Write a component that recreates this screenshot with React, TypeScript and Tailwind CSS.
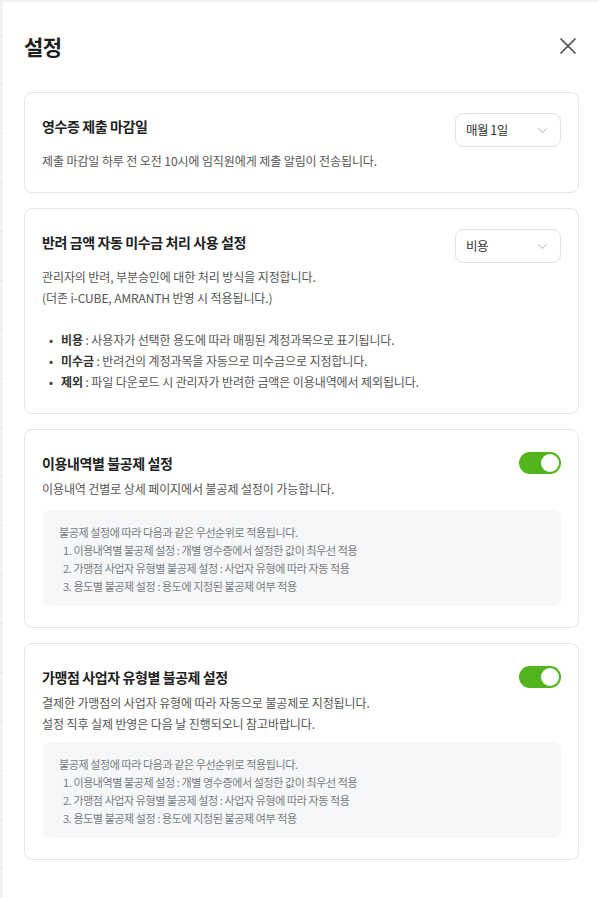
import { X, ChevronDown } from "lucide-react"

const font = { fontFamily: '"Noto Sans CJK KR", "Noto Sans", sans-serif' }

const priorityLines = [
    "1. 이용내역별 불공제 설정 : 개별 영수증에서 설정한 값이 최우선 적용",
    "2. 가맹점 사업자 유형별 불공제 설정 : 사업자 유형에 따라 자동 적용",
    "3. 용도별 불공제 설정 : 용도에 지정된 불공제 여부 적용",
]

function Select({ value }: { value: string }) {
    return (
        <button className="flex h-[34px] w-[106px] shrink-0 items-center justify-between rounded-[8px] border border-[#e1e3e6] bg-white pl-[10px] pr-[10px] text-[12.5px] tracking-[-0.5px] text-[#333]">
            <span>{value}</span>
            <ChevronDown size={15} strokeWidth={1.3} className="text-[#9a9ea5]" />
        </button>
    )
}

function Toggle() {
    return (
        <div className="flex h-[22px] w-[42px] shrink-0 items-center justify-end rounded-full bg-[#52b51e] pr-[2px]">
            <div className="h-[18px] w-[18px] rounded-full bg-white" />
        </div>
    )
}

function Card({ children }: { children: React.ReactNode }) {
    return (
        <section className="rounded-[8px] border border-[#e3e5e8] bg-white px-[17px] pt-[20px] pb-[21px]">
            {children}
        </section>
    )
}

function Title({ children }: { children: React.ReactNode }) {
    return <h3 className="text-[14px] font-bold leading-[26px] tracking-[-0.4px] text-[#222]">{children}</h3>
}

function PriorityBox({ className }: { className: string }) {
    return (
        <div className={`rounded-[8px] bg-[#f6f7f9] pl-[17px] pt-[13px] pb-[11px] text-[11px] leading-[18px] tracking-[-0.4px] text-[#777b80] ${className}`}>
            <p>불공제 설정에 따라 다음과 같은 우선순위로 적용됩니다.</p>
            {priorityLines.map((line) => (
                <p key={line} className="pl-[4px]">{line}</p>
            ))}
        </div>
    )
}

const bullets = [
    { label: "비용", text: "사용자가 선택한 용도에 따라 매핑된 계정과목으로 표기됩니다." },
    { label: "미수금", text: "반려건의 계정과목을 자동으로 미수금으로 지정합니다." },
    { label: "제외", text: "파일 다운로드 시 관리자가 반려한 금액은 이용내역에서 제외됩니다." },
]

export default function App() {
    return (
        <div className="flex min-h-screen bg-[#f2f2f3] pt-[2px]" style={font}>
            {/* page behind the drawer */}
            <div className="w-[3px] shrink-0 bg-[repeating-linear-gradient(to_bottom,#f2f2f3_0px,#f2f2f3_33px,#e4e4e6_33px,#e4e4e6_34px,#f2f2f3_34px,#f2f2f3_49px)]" />

            <div className="flex-1 bg-white pl-[21px] pr-[20px] pt-[28px] pb-[38px]">
                {/* Header */}
                <div className="mb-[30px] flex items-center justify-between">
                    <h2 className="text-[21px] font-bold leading-[32px] tracking-[-0.5px] text-[#1e1e1e]">설정</h2>
                    <button className="mr-[-3px] text-[#4b4f55]">
                        <X size={28} strokeWidth={1.5} />
                    </button>
                </div>

                <div className="flex flex-col gap-[15px]">
                    {/* 영수증 제출 마감일 */}
                    <Card>
                        <div className="flex items-start justify-between">
                            <Title>영수증 제출 마감일</Title>
                            <Select value="매월 1일" />
                        </div>
                        <p className="mt-[3px] text-[12px] leading-[21px] tracking-[-0.1px] text-[#555]">
                            제출 마감일 하루 전 오전 10시에 임직원에게 제출 알림이 전송됩니다.
                        </p>
                    </Card>

                    {/* 반려 금액 자동 미수금 처리 */}
                    <Card>
                        <div className="flex items-start justify-between">
                            <Title>반려 금액 자동 미수금 처리 사용 설정</Title>
                            <Select value="비용" />
                        </div>
                        <div className="mt-[3px] text-[12px] leading-[21px] tracking-[-0.1px] text-[#555]">
                            <p>관리자의 반려, 부분승인에 대한 처리 방식을 지정합니다.</p>
                            <p>(더존 i-CUBE, AMRANTH 반영 시 적용됩니다.)</p>
                            <ul className="mt-[21px]">
                                {bullets.map((b) => (
                                    <li key={b.label} className="flex">
                                        <span className="w-[19px] shrink-0 pl-[7px] text-[#444]">•</span>
                                        <span>
                                            <b className="font-bold text-[#333]">{b.label}</b> : {b.text}
                                        </span>
                                    </li>
                                ))}
                            </ul>
                        </div>
                    </Card>

                    {/* 이용내역별 불공제 */}
                    <Card>
                        <div className="flex items-center justify-between">
                            <Title>이용내역별 불공제 설정</Title>
                            <Toggle />
                        </div>
                        <p className="mt-[2px] text-[12px] leading-[21px] tracking-[-0.1px] text-[#555]">
                            이용내역 건별로 상세 페이지에서 불공제 설정이 가능합니다.
                        </p>
                        <PriorityBox className="mt-[11px]" />
                    </Card>

                    {/* 가맹점 사업자 유형별 불공제 */}
                    <Card>
                        <div className="flex items-center justify-between">
                            <Title>가맹점 사업자 유형별 불공제 설정</Title>
                            <Toggle />
                        </div>
                        <div className="mt-[2px] text-[12px] leading-[21px] tracking-[-0.1px] text-[#555]">
                            <p>결제한 가맹점의 사업자 유형에 따라 자동으로 불공제로 지정됩니다.</p>
                            <p>설정 직후 실제 반영은 다음 날 진행되오니 참고바랍니다.</p>
                        </div>
                        <PriorityBox className="mt-[8px]" />
                    </Card>
                </div>
            </div>
        </div>
    )
}
